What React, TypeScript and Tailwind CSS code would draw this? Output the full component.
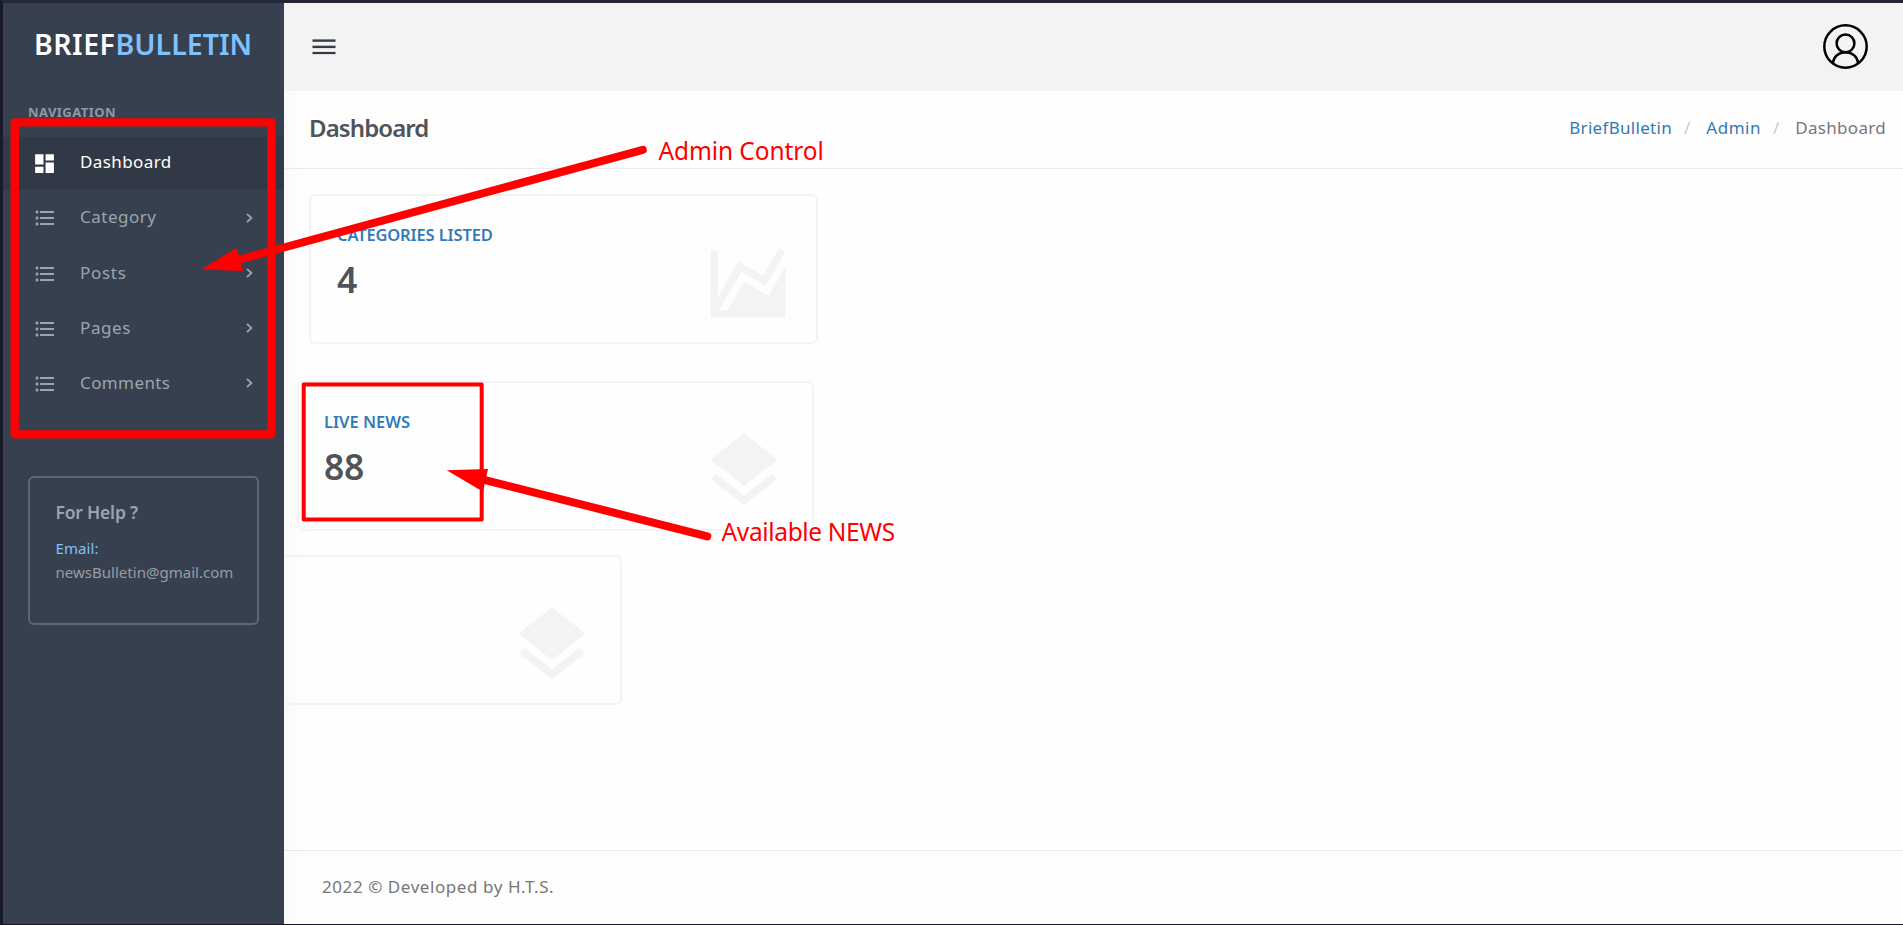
import type { ReactNode } from "react";
import { MdDashboard, MdFormatListBulleted } from "react-icons/md";

const LAYERS =
  "M12,16L19.36,10.27L21,9L12,2L3,9L4.63,10.27M12,18.54L4.62,12.81L3,14.07L12,21.07L21,14.07L19.37,12.8L12,18.54Z";
const CHART =
  "M17.45,15.18L22,7.31V21H2V3H4V15.54L9.5,6L16,9.78L20.24,2.45L21.97,3.45L16.74,12.5L10.23,8.75L4.31,19H6.57L10.96,11.44L17.45,15.18Z";

const menu = [
  { label: "Category", spacing: "mb-[3px] tracking-[0.5px]", icon: "mt-px" },
  { label: "Posts", spacing: "mb-px tracking-[0.7px]", icon: "mt-[2px]" },
  { label: "Pages", spacing: "mb-px tracking-[0.6px]", icon: "mt-[2px]" },
  { label: "Comments", spacing: "mb-px tracking-[0.4px]", icon: "mt-[2px]" },
];

function Chevron() {
  return (
    <svg className="ml-auto mr-[31px] h-[10px] w-[7px] shrink-0" viewBox="0 0 7 10" fill="none" stroke="currentColor" strokeWidth="1.8">
      <path d="M1 0.8L5.4 5L1 9.2" />
    </svg>
  );
}

function Sidebar() {
  return (
    <aside className="flex w-[281px] shrink-0 flex-col bg-[#37404e] text-[#98a6ad]">
      <div className="flex h-[82px] items-center pl-[31px] text-[28.5px] font-semibold leading-none text-white">
        <span className="tracking-[0.5px]">BRIEF</span>
        <span className="tracking-[0.05px] text-[#7fc1fc]">BULLETIN</span>
      </div>
      <div className="mt-[18px] flex h-5 items-center pl-[25px] text-[13px] font-bold tracking-[0.45px] text-[#8d9aa2]">NAVIGATION</div>
      <nav className="mt-[14px] flex flex-col text-[17px] leading-none">
        <a className="flex h-[53px] items-center bg-[#313946] pl-[29px] text-white">
          <MdDashboard className="mb-px h-[25px] w-[25px]" />
          <span className="mb-[4px] ml-[23px] tracking-[0.4px]">Dashboard</span>
        </a>
        {menu.map((m) => (
          <a key={m.label} className="flex h-[55px] items-center pl-[29.5px]">
            <MdFormatListBulleted className={`h-6 w-6 ${m.icon}`} />
            <span className={`ml-[23.5px] ${m.spacing}`}>{m.label}</span>
            <Chevron />
          </a>
        ))}
      </nav>
      <div className="ml-[25px] mt-[66px] flex h-[149px] w-[231px] flex-col rounded-[6px] border-2 border-[#5d6872] pl-[25.5px] pt-[22px]">
        <div className="text-[17.5px] font-semibold leading-6 tracking-[-0.2px]">For Help ?</div>
        <div className="mt-3 text-[15px] leading-6 tracking-[0.1px] text-[#7fc1fc]">Email:</div>
        <div className="text-[15px] leading-6 tracking-[0.02px] text-[#989da4]">newsBulletin@gmail.com</div>
      </div>
    </aside>
  );
}

function Topbar() {
  return (
    <header className="flex h-[88px] shrink-0 items-center justify-between bg-[#f3f3f3] pb-px pl-[28px] pr-[35px]">
      <svg className="h-4 w-[24px]" viewBox="0 0 24 16" fill="#333a49">
        <rect x="0.5" y="0.4" width="23" height="2.4" />
        <rect x="0.5" y="6.7" width="23" height="2.4" />
        <rect x="0.5" y="12.9" width="23" height="2.2" />
      </svg>
      <svg className="mb-px h-[45px] w-[45px]" viewBox="0 0 45 45" fill="none" stroke="#000" strokeWidth="2.5">
        <circle cx="22.5" cy="22.5" r="21.2" />
        <circle cx="22.5" cy="19.4" r="8.9" />
        <path d="M9.8 39.4C10.4 32.8 15.6 28.3 22.5 28.3S34.6 32.8 35.2 39.4" />
      </svg>
    </header>
  );
}

function Card({ className, title, value, icon }: { className: string; title?: ReactNode; value?: string; icon: string }) {
  return (
    <section className={`flex h-[150px] shrink-0 justify-between rounded-[6px] border-2 border-[#f3f3f3] ${className}`}>
      <div className="pt-[27px]">
        <div className="text-[16.5px] font-semibold leading-6 text-[#337ab7]">{title}</div>
        <div className="mt-3 text-[35.5px] font-semibold leading-10 tracking-[-0.2px] text-[#505458]">{value}</div>
      </div>
      <svg className="mr-[23px] mt-[43px] h-[90px] w-[90px]" viewBox="0 0 24 24" fill="#f3f3f3">
        <path d={icon} />
      </svg>
    </section>
  );
}

function Annotations() {
  return (
    <div className="pointer-events-none absolute -left-[3px] -top-[3px] h-[925px] w-[1903px] text-[24.5px] leading-8 text-[#ff0000]">
      <svg className="absolute inset-0 h-[925px] w-[1903px]" viewBox="0 0 1903 925" fill="none" stroke="#ff0000">
        <rect x="14.7" y="122.3" width="256.6" height="312" strokeWidth="8.3" strokeLinejoin="round" />
        <rect x="303.7" y="384.4" width="178" height="135" strokeWidth="4" strokeLinejoin="round" />
        <path d="M642.8 149.8L238 260" strokeWidth="8" strokeLinecap="round" />
        <path d="M201.5 269.6L236.7 247.7L243 271Z" fill="#ff0000" stroke="none" />
        <path d="M707.3 536.3L484 479.8" strokeWidth="8" strokeLinecap="round" />
        <path d="M446.7 470.3L488 469L483 491.7Z" fill="#ff0000" stroke="none" />
      </svg>
      <span className="absolute left-[658.5px] top-[134.5px] whitespace-nowrap tracking-[-0.1px]">Admin Control</span>
      <span className="absolute left-[721.5px] top-[515.5px] whitespace-nowrap tracking-[-0.35px]">Available NEWS</span>
    </div>
  );
}

export default function App() {
  return (
    <div className="relative flex h-[925px] w-[1903px] overflow-hidden border-b border-l-[3px] border-t-[3px] border-b-[#161624] border-l-[#181a2b] border-t-[#24263a] bg-white font-['Noto_Sans','Open_Sans',sans-serif] antialiased">
      <Sidebar />
      <div className="flex min-w-0 flex-1 flex-col">
        <Topbar />
        <div className="flex min-h-0 flex-1 flex-col bg-[linear-gradient(to_right,#fafafa,#fdfdfd_14px,#fefefe_28px)]">
          <div className="flex h-[78px] shrink-0 items-center justify-between border-b border-[#ebebeb] pb-[4px] pl-[25px] pr-[17px]">
            <h1 className="text-[24px] font-semibold leading-8 tracking-[-0.9px] text-[#505458]">Dashboard</h1>
            <div className="flex items-center text-[17px] leading-6 text-[#777]">
              <span className="tracking-[0.3px] text-[#337ab7]">BriefBulletin</span>
              <span className="ml-[12px] text-[#ccc]">/</span>
              <span className="ml-[16px] tracking-[0.5px] text-[#337ab7]">Admin</span>
              <span className="ml-[12px] text-[#ccc]">/</span>
              <span className="ml-[16px] tracking-[0.3px]">Dashboard</span>
            </div>
          </div>
          <main className="flex min-h-0 flex-1 flex-col overflow-hidden">
            <Card className="ml-[25px] mt-[25px] w-[509px] pl-[26px]" title={<span className="tracking-[-0.15px]">CATEGORIES LISTED</span>} value="4" icon={CHART} />
            <Card className="ml-[13px] mt-[37px] w-[517px] pl-[25px]" title="LIVE NEWS" value="88" icon={LAYERS} />
            <Card className="-ml-[40px] mt-6 w-[378px] pl-10" icon={LAYERS} />
          </main>
          <footer className="flex h-[74px] shrink-0 items-center border-t border-[#e8e8e8] pb-[2px] pl-[38px] text-[17px] leading-6 tracking-[0.57px] text-[#777]">
            2022 © Developed by H.T.S.
          </footer>
        </div>
      </div>
      <Annotations />
    </div>
  );
}
